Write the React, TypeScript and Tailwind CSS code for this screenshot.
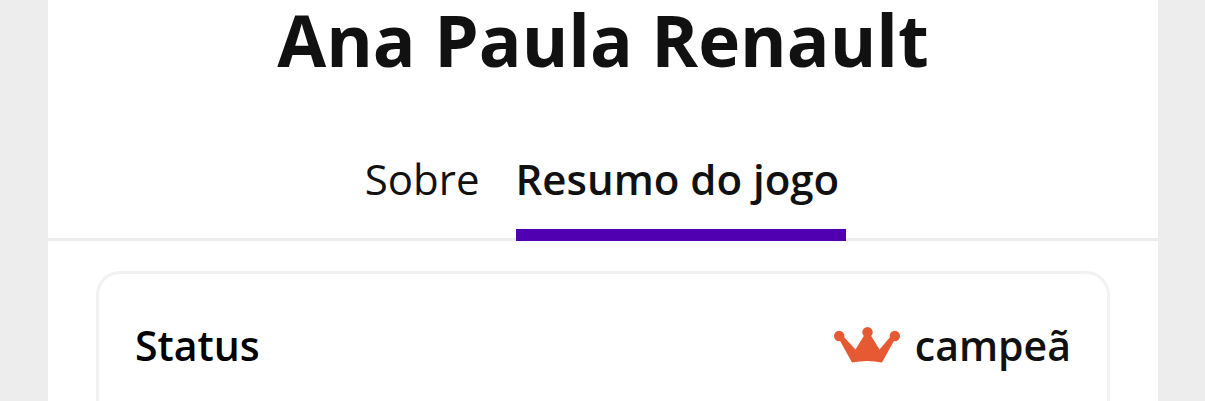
export default function App() {
  return (
    <div className="min-h-screen bg-[#ededed] pr-[47px] pl-12 font-['Open_Sans','Noto_Sans',sans-serif] text-[#111]">
      <main className="flex min-h-screen flex-col bg-white">
        <h1 className="text-center text-[71px] leading-[80px] font-bold">Ana Paula Renault</h1>
        <nav className="mt-[73px] flex justify-center gap-9 border-b-[3px] border-[#ededed] pl-[5px] text-[42px] leading-[52px]">
          <a href="#sobre">Sobre</a>
          <a
            href="#resumo"
            aria-current="page"
            className="-mb-[3px] border-b-12 border-[#5000b0] pr-[7px] pb-6 font-semibold"
          >
            Resumo do jogo
          </a>
        </nav>
        <section className="mx-12 mt-[30px] flex-1 rounded-t-3xl border-x-[3px] border-t-[3px] border-[#f2f2f2] px-9 pt-[45px]">
          <dl className="flex items-center justify-between text-[41px] leading-[52px] font-semibold">
            <dt className="text-black">Status</dt>
            <dd className="flex items-center gap-[15px]">
              <svg viewBox="0 0 66 36" className="h-9 w-[66px]" fill="#e65a33" aria-hidden="true">
                <path d="M18 35.5 5 12 9 9 21.5 22.5 31 7H36L45.5 22.5 57 9 61 12 48 35.5Q33 32.5 18 35.5Z" />
                <circle cx="5.2" cy="9" r="5.2" />
                <circle cx="33.5" cy="5.2" r="5.2" />
                <circle cx="60.8" cy="9" r="5.2" />
              </svg>
              campeã
            </dd>
          </dl>
        </section>
      </main>
    </div>
  );
}
